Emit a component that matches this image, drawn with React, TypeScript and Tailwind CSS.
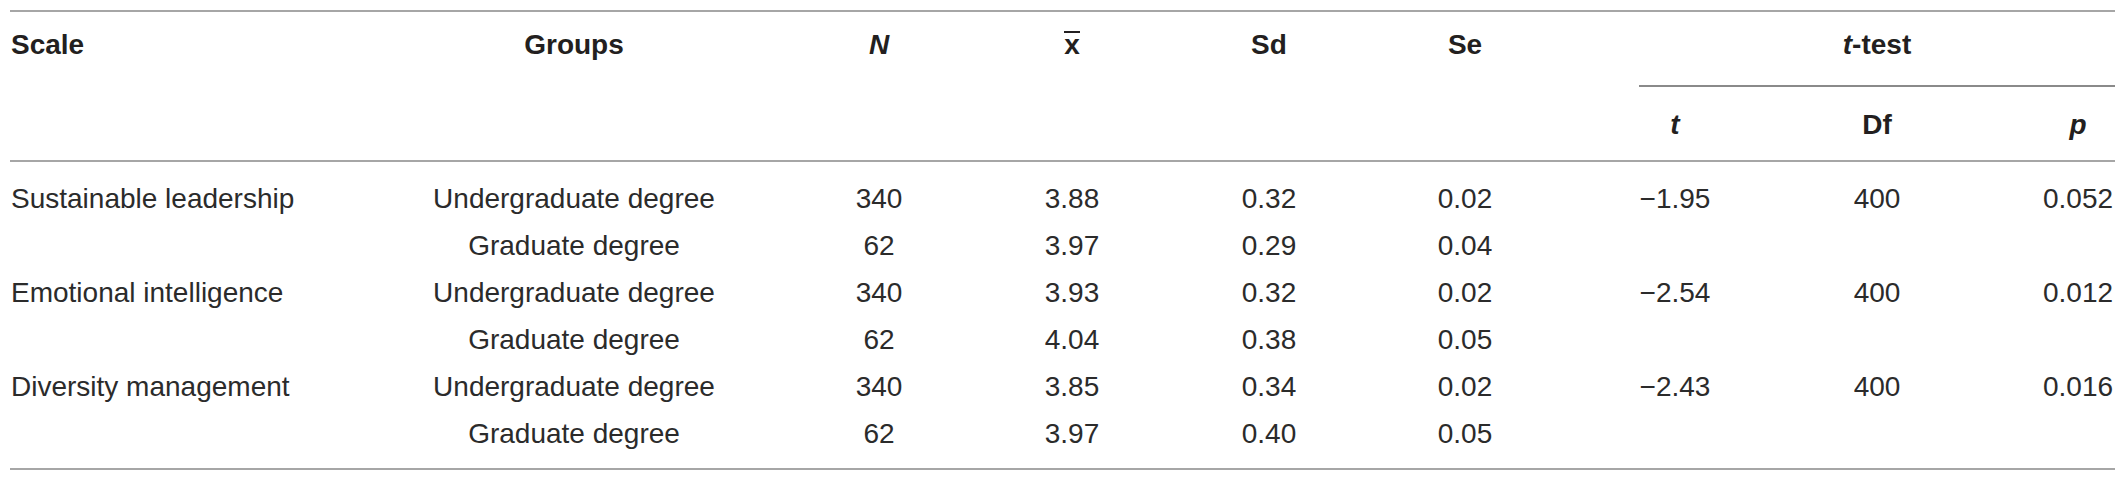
const rows = [
  ["Sustainable leadership", "Undergraduate degree", "340", "3.88", "0.32", "0.02", "−1.95", "400", "0.052"],
  ["", "Graduate degree", "62", "3.97", "0.29", "0.04", "", "", ""],
  ["Emotional intelligence", "Undergraduate degree", "340", "3.93", "0.32", "0.02", "−2.54", "400", "0.012"],
  ["", "Graduate degree", "62", "4.04", "0.38", "0.05", "", "", ""],
  ["Diversity management", "Undergraduate degree", "340", "3.85", "0.34", "0.02", "−2.43", "400", "0.016"],
  ["", "Graduate degree", "62", "3.97", "0.40", "0.05", "", "", ""],
];

// column grid shared by header and body so centres line up
const cols = "grid grid-cols-[290px_548px_62px_324px_70px_322px_98px_306px_96px] w-[2116px]";

function XBar() {
  return (
    <span className="relative inline-block leading-none">
      x
      <span className="absolute left-0 right-0 top-0 h-[2px] bg-[#231f20]" />
    </span>
  );
}

export default function App() {
  return (
    <div className="min-h-[483px] bg-white pt-[10px] text-[28px] text-[#231f20] font-['Liberation_Sans',Arial,sans-serif]">
      <div className="ml-[10px] w-[2105px] border-t-2 border-b-2 border-[#a6a6a6]">
        {/* header */}
        <div className="border-b-2 border-[#a6a6a6]">
          <div className={cols + " h-[75px] font-bold leading-[34px]"}>
            <div className="pt-[16px] pl-[1px]">Scale</div>
            <div className="pt-[16px] text-center">Groups</div>
            <div className="pt-[16px] text-center italic">N</div>
            <div className="pt-[16px] text-center"><XBar /></div>
            <div className="pt-[16px] text-center">Sd</div>
            <div className="pt-[16px] text-center">Se</div>
            <div className="col-span-3 pt-[16px]">
              <div className="ml-[13px] mr-[11px] h-[59px] border-b-2 border-[#8a8a8a] text-center">
                <span className="italic">t</span>-test
              </div>
            </div>
          </div>
          <div className={cols + " h-[73px] font-bold leading-[34px]"}>
            <div />
            <div />
            <div />
            <div />
            <div />
            <div />
            <div className="pt-[21px] text-center italic">t</div>
            <div className="pt-[21px] text-center">Df</div>
            <div className="pt-[21px] text-center italic">p</div>
          </div>
        </div>

        {/* body */}
        <div className="pt-[13px] pb-[11px] text-[#2b2b2b]">
          {rows.map((r, i) => (
            <div key={i} className={cols + " leading-[47px]"}>
              {r.map((c, j) => (
                <div key={j} className={j === 0 ? "pl-[1px] whitespace-nowrap" : "text-center whitespace-nowrap"}>
                  {c}
                </div>
              ))}
            </div>
          ))}
        </div>
      </div>
    </div>
  );
}
